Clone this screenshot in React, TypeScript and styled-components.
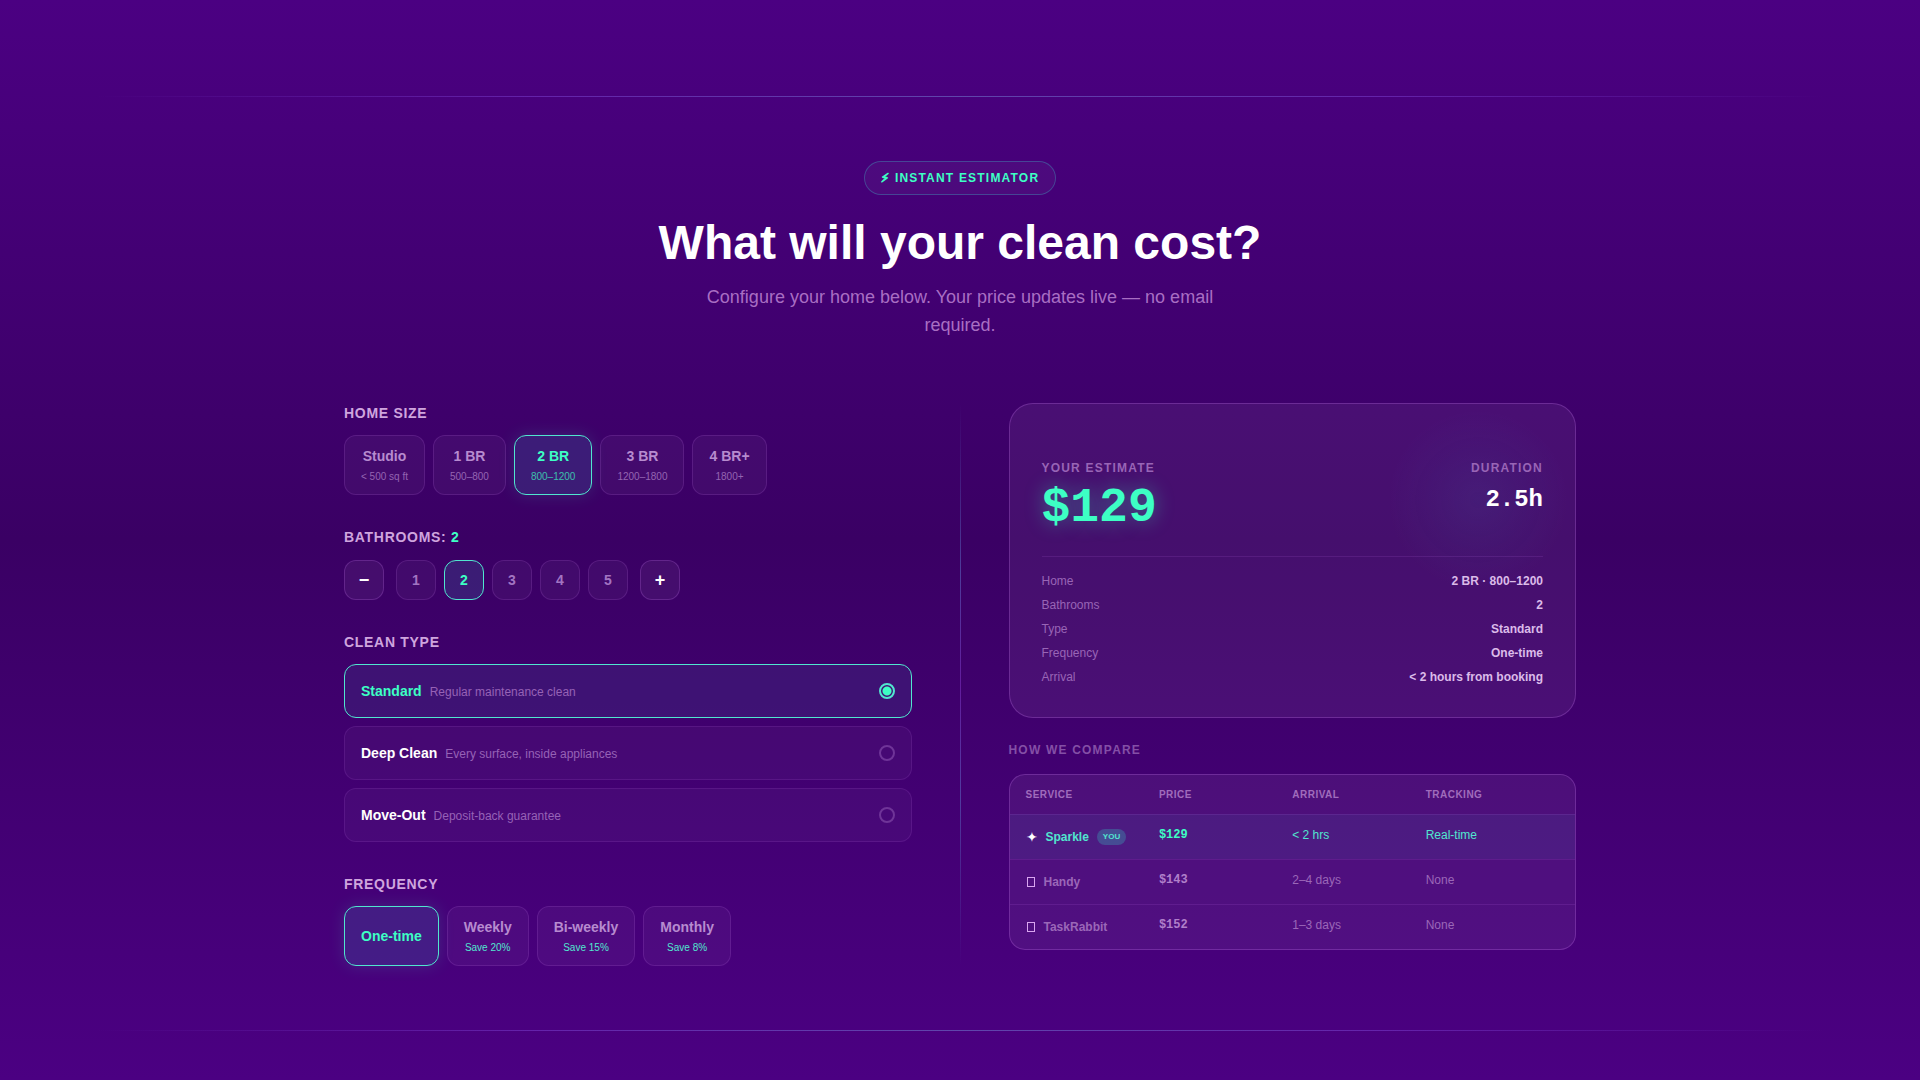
import React, { useState } from "react";
import styled, { createGlobalStyle, css } from "styled-components";

const mint = "#3dffc4";
const sans = `"Liberation Sans", Arial, sans-serif`;
const mono = `"Liberation Mono", "Courier New", monospace`;

const GlobalStyle = createGlobalStyle`
  *, *::before, *::after { box-sizing: border-box; }
  body {
    margin: 0;
    background: #4b0082;
    color: #fff;
    font-family: ${sans};
  }
  button, input, table { font: inherit; color: inherit; }
`;

const Page = styled.div`
  min-height: 100vh;
  padding: 96px 0 49px;
  background: linear-gradient(180deg, #4b0082 0%, #3a0064 50%, #4b0082 100%);
`;

const Rule = styled.hr`
  height: 1px;
  margin: 0;
  border: 0;
  background: linear-gradient(
    90deg,
    transparent 5%,
    rgba(123, 63, 206, 0.55) 28%,
    rgba(105, 100, 190, 0.7) 50%,
    rgba(123, 63, 206, 0.55) 72%,
    transparent 95%
  );
`;

const Container = styled.main`
  max-width: 1280px;
  margin: 0 auto;
  padding: 64px 24px;
`;

const Intro = styled.header`
  display: flex;
  flex-direction: column;
  align-items: center;
  margin-bottom: 64px;
  text-align: center;
`;

const Pill = styled.span`
  padding: 8px 16px;
  border: 1px solid rgba(61, 180, 196, 0.35);
  border-radius: 17px;
  background: rgba(255, 255, 255, 0.04);
  color: ${mint};
  font-size: 12px;
  font-weight: 700;
  line-height: 16px;
  letter-spacing: 0.1em;
  text-transform: uppercase;
`;

const Bolt = styled.span`
  font-family: "DejaVu Sans", sans-serif;
  font-variant-emoji: text;
  -webkit-text-stroke: 1px currentColor;
`;

const Title = styled.h1`
  margin: 24px 0 16px;
  font-size: 48px;
  font-weight: 700;
  line-height: 48px;
`;

const Lead = styled.p`
  max-width: 512px;
  margin: 0;
  color: rgba(216, 160, 232, 0.7);
  font-size: 18px;
  line-height: 28px;
`;

const Columns = styled.div`
  display: grid;
  grid-template-columns: minmax(0, 1fr) 1px minmax(0, 1fr);
  column-gap: 48px;
`;

const Divider = styled.div`
  background: linear-gradient(
    180deg,
    transparent,
    rgba(90, 100, 190, 0.6) 30%,
    rgba(123, 47, 190, 0.6) 50%,
    rgba(90, 100, 190, 0.6) 70%,
    transparent
  );
`;

const Form = styled.form`
  display: flex;
  flex-direction: column;
  gap: 32px;
`;

const Field = styled.fieldset`
  min-width: 0;
  margin: 0;
  padding: 0;
  border: 0;
`;

const Legend = styled.legend`
  margin-bottom: 12px;
  padding: 0;
  color: #cfa5de;
  font-size: 14px;
  font-weight: 700;
  line-height: 20px;
  letter-spacing: 0.05em;
  text-transform: uppercase;

  b { color: ${mint}; }
`;

const Row = styled.div`
  display: flex;
  flex-wrap: wrap;
  gap: 8px;
`;

const selected = css`
  border-color: #51e6cf;
  background: rgba(61, 140, 180, 0.2);
  color: ${mint};
`;

const Choice = styled.button<{ $on: boolean }>`
  display: flex;
  flex-direction: column;
  align-items: center;
  justify-content: center;
  gap: 3px;
  height: 60px;
  padding: 0 16px;
  border: 1px solid rgba(190, 110, 230, 0.18);
  border-radius: 12px;
  background: rgba(255, 255, 255, 0.04);
  color: #b78bcf;
  font-size: 14px;
  font-weight: 700;
  line-height: 20px;
  cursor: pointer;
  ${(p) => p.$on && selected}
  ${(p) => p.$on && css`box-shadow: 0 0 16px rgba(61, 255, 196, 0.15);`}
`;

const ChoiceNote = styled.small<{ $mint?: boolean }>`
  color: ${(p) => (p.$mint ? "#51e6cf" : "inherit")};
  font-size: 10px;
  font-weight: 400;
  line-height: 16px;
  opacity: ${(p) => (p.$mint ? 1 : 0.7)};
`;

const Steps = styled.div`
  display: flex;
  align-items: flex-end;
  gap: 12px;
  min-height: 41px;
`;

const Square = styled.button<{ $on?: boolean; $strong?: boolean }>`
  width: 40px;
  height: 40px;
  padding: 0;
  border: 1px solid rgba(190, 110, 230, ${(p) => (p.$strong ? 0.25 : 0.18)});
  border-radius: 12px;
  background: rgba(255, 255, 255, ${(p) => (p.$strong ? 0.05 : 0.04)});
  color: ${(p) => (p.$strong ? "#fff" : "#a274c2")};
  font-size: ${(p) => (p.$strong ? 18 : 14)}px;
  font-weight: 700;
  line-height: 20px;
  cursor: pointer;
  ${(p) => p.$on && selected}
`;

const Options = styled.div`
  display: flex;
  flex-direction: column;
  gap: 8px;
`;

const Option = styled.label<{ $on: boolean }>`
  display: flex;
  align-items: center;
  justify-content: space-between;
  height: 54px;
  padding: 0 16px;
  border: 1px solid ${(p) => (p.$on ? "#51e6cf" : "rgba(190, 110, 230, 0.15)")};
  border-radius: 12px;
  background: ${(p) => (p.$on ? "rgba(61, 140, 170, 0.13)" : "rgba(255, 255, 255, 0.03)")};
  line-height: 20px;
  cursor: pointer;
`;

const OptionText = styled.span`
  display: flex;
  align-items: baseline;
  gap: 8px;
`;

const OptionName = styled.span<{ $on: boolean }>`
  color: ${(p) => (p.$on ? mint : "#fff")};
  font-size: 14px;
  font-weight: 700;
`;

const OptionNote = styled.span`
  color: #9662b6;
  font-size: 12px;
`;

const Radio = styled.input`
  appearance: none;
  width: 16px;
  height: 16px;
  margin: 0;
  border: 2px solid #6f3498;
  border-radius: 50%;

  &:checked {
    border-color: #51e6cf;
    background: radial-gradient(circle, ${mint} 0 4px, transparent 5px);
  }
`;

const Side = styled.aside`
  min-width: 0;
`;

const Card = styled.section`
  padding: 56px 32px 32px;
  border: 1px solid rgba(190, 110, 230, 0.3);
  border-radius: 24px;
  background:
    radial-gradient(circle 90px at 468px 96px, rgba(61, 130, 186, 0.11), transparent),
    rgba(255, 255, 255, 0.06);
`;

const Summary = styled.div`
  display: flex;
  justify-content: space-between;
  padding-bottom: 24px;
  border-bottom: 1px solid rgba(190, 110, 230, 0.15);
`;

const Figure = styled.div<{ $end?: boolean }>`
  text-align: ${(p) => (p.$end ? "right" : "left")};
`;

const Caption = styled.h2`
  margin: 0;
  color: #9965b6;
  font-size: 12px;
  font-weight: 700;
  line-height: 16px;
  letter-spacing: 0.1em;
  text-transform: uppercase;
`;

const Price = styled.output`
  display: block;
  margin-top: 8px;
  color: ${mint};
  font-family: ${mono};
  font-size: 48px;
  font-weight: 700;
  line-height: 48px;
  text-shadow: 0 0 20px rgba(61, 255, 196, 0.4);
`;

const Duration = styled.output`
  display: block;
  margin-top: 8px;
  font-family: ${mono};
  font-size: 24px;
  font-weight: 700;
  line-height: 32px;
`;

const Details = styled.dl`
  display: flex;
  flex-direction: column;
  gap: 8px;
  margin: 16px 0 0;
  font-size: 12px;
  line-height: 16px;

  div { display: flex; justify-content: space-between; }
  dt { color: #9965b6; }
  dd { margin: 0; color: #dbbbe9; font-weight: 700; }
`;

const CompareTitle = styled(Caption)`
  margin: 24px 0 16px;
  color: #844fa6;
`;

const Table = styled.table`
  display: block;
  overflow: hidden;
  border: 1px solid rgba(190, 110, 230, 0.3);
  border-radius: 16px;
  background: rgba(255, 255, 255, 0.06);
  font-size: 12px;
  line-height: 16px;
  text-align: left;

  thead, tbody { display: block; }
  th, td { padding: 0; }
`;

const HeadRow = styled.tr`
  display: grid;
  grid-template-columns: repeat(4, minmax(0, 1fr));
  padding: 12px 16px;
  color: #a06cbc;
  font-size: 10px;
  line-height: 15px;
  letter-spacing: 0.05em;
  text-transform: uppercase;
`;

const BodyRow = styled.tr<{ $us: boolean }>`
  display: grid;
  grid-template-columns: repeat(4, minmax(0, 1fr));
  padding: 12px 16px;
  border-top: 1px solid rgba(190, 110, 230, 0.15);
  background: ${(p) => (p.$us ? "rgba(61, 130, 170, 0.11)" : "transparent")};
  color: ${(p) => (p.$us ? "#51e6cf" : "#9b67b8")};
`;

const Service = styled.th`
  display: flex;
  align-items: center;
  gap: 8px;
  height: 20px;
`;

const Star = styled.span`
  color: #fff;
  font-size: 14px;
  font-weight: 400;
`;

const Box = styled.svg`
  width: 10px;
  height: 14px;
  fill: none;
  stroke: #d9a5f0;
`;

const You = styled.span`
  padding: 0 6px;
  border-radius: 9px;
  background: rgba(61, 150, 176, 0.4);
  font-size: 8px;
`;

const Cost = styled.td<{ $us: boolean }>`
  color: ${(p) => (p.$us ? mint : "#b07fca")};
  font-family: ${mono};
  font-weight: 700;
`;

const sizes = [
  { name: "Studio", area: "< 500 sq ft" },
  { name: "1 BR", area: "500–800" },
  { name: "2 BR", area: "800–1200" },
  { name: "3 BR", area: "1200–1800" },
  { name: "4 BR+", area: "1800+" },
];

const types = [
  { name: "Standard", note: "Regular maintenance clean" },
  { name: "Deep Clean", note: "Every surface, inside appliances" },
  { name: "Move-Out", note: "Deposit-back guarantee" },
];

const frequencies = [
  { name: "One-time", saving: "" },
  { name: "Weekly", saving: "Save 20%" },
  { name: "Bi-weekly", saving: "Save 15%" },
  { name: "Monthly", saving: "Save 8%" },
];

const services = [
  { name: "Sparkle", price: "$129", arrival: "< 2 hrs", tracking: "Real-time", us: true },
  { name: "Handy", price: "$143", arrival: "2–4 days", tracking: "None", us: false },
  { name: "TaskRabbit", price: "$152", arrival: "1–3 days", tracking: "None", us: false },
];

export default function App() {
  const [size, setSize] = useState(2);
  const [baths, setBaths] = useState(2);
  const [type, setType] = useState(0);
  const [frequency, setFrequency] = useState(0);

  const details = [
    ["Home", `${sizes[size].name} · ${sizes[size].area}`],
    ["Bathrooms", String(baths)],
    ["Type", types[type].name],
    ["Frequency", frequencies[frequency].name],
    ["Arrival", "< 2 hours from booking"],
  ];

  return (
    <Page>
      <GlobalStyle />
      <Rule />
      <Container>
        <Intro>
          <Pill>
            <Bolt>{"\u26A1\uFE0E"}</Bolt> Instant Estimator
          </Pill>
          <Title>What will your clean cost?</Title>
          <Lead>Configure your home below. Your price updates live — no email required.</Lead>
        </Intro>
        <Columns>
          <Form>
            <Field>
              <Legend>Home Size</Legend>
              <Row>
                {sizes.map((s, i) => (
                  <Choice key={s.name} type="button" $on={i === size} aria-pressed={i === size} onClick={() => setSize(i)}>
                    {s.name}
                    <ChoiceNote>{s.area}</ChoiceNote>
                  </Choice>
                ))}
              </Row>
            </Field>
            <Field>
              <Legend>
                Bathrooms: <b>{baths}</b>
              </Legend>
              <Steps>
                <Square type="button" $strong aria-label="Fewer bathrooms" onClick={() => setBaths(Math.max(1, baths - 1))}>
                  −
                </Square>
                <Row>
                  {[1, 2, 3, 4, 5].map((n) => (
                    <Square key={n} type="button" $on={n === baths} aria-pressed={n === baths} onClick={() => setBaths(n)}>
                      {n}
                    </Square>
                  ))}
                </Row>
                <Square type="button" $strong aria-label="More bathrooms" onClick={() => setBaths(Math.min(5, baths + 1))}>
                  +
                </Square>
              </Steps>
            </Field>
            <Field>
              <Legend>Clean Type</Legend>
              <Options>
                {types.map((t, i) => (
                  <Option key={t.name} $on={i === type}>
                    <OptionText>
                      <OptionName $on={i === type}>{t.name}</OptionName>
                      <OptionNote>{t.note}</OptionNote>
                    </OptionText>
                    <Radio type="radio" name="clean-type" checked={i === type} onChange={() => setType(i)} />
                  </Option>
                ))}
              </Options>
            </Field>
            <Field>
              <Legend>Frequency</Legend>
              <Row>
                {frequencies.map((f, i) => (
                  <Choice key={f.name} type="button" $on={i === frequency} aria-pressed={i === frequency} onClick={() => setFrequency(i)}>
                    {f.name}
                    {f.saving && <ChoiceNote $mint>{f.saving}</ChoiceNote>}
                  </Choice>
                ))}
              </Row>
            </Field>
          </Form>
          <Divider />
          <Side>
            <Card>
              <Summary>
                <Figure>
                  <Caption>Your Estimate</Caption>
                  <Price>$129</Price>
                </Figure>
                <Figure $end>
                  <Caption>Duration</Caption>
                  <Duration>2.5h</Duration>
                </Figure>
              </Summary>
              <Details>
                {details.map(([term, value]) => (
                  <div key={term}>
                    <dt>{term}</dt>
                    <dd>{value}</dd>
                  </div>
                ))}
              </Details>
            </Card>
            <CompareTitle>How We Compare</CompareTitle>
            <Table>
              <thead>
                <HeadRow>
                  <th scope="col">Service</th>
                  <th scope="col">Price</th>
                  <th scope="col">Arrival</th>
                  <th scope="col">Tracking</th>
                </HeadRow>
              </thead>
              <tbody>
                {services.map((s) => (
                  <BodyRow key={s.name} $us={s.us}>
                    <Service scope="row">
                      {s.us ? (
                        <Star>✦</Star>
                      ) : (
                        <Box viewBox="0 0 10 14" aria-hidden="true">
                          <rect x="1.5" y="2.5" width="7" height="9" />
                        </Box>
                      )}
                      {s.name}
                      {s.us && <You>YOU</You>}
                    </Service>
                    <Cost $us={s.us}>{s.price}</Cost>
                    <td>{s.arrival}</td>
                    <td>{s.tracking}</td>
                  </BodyRow>
                ))}
              </tbody>
            </Table>
          </Side>
        </Columns>
      </Container>
      <Rule />
    </Page>
  );
}
